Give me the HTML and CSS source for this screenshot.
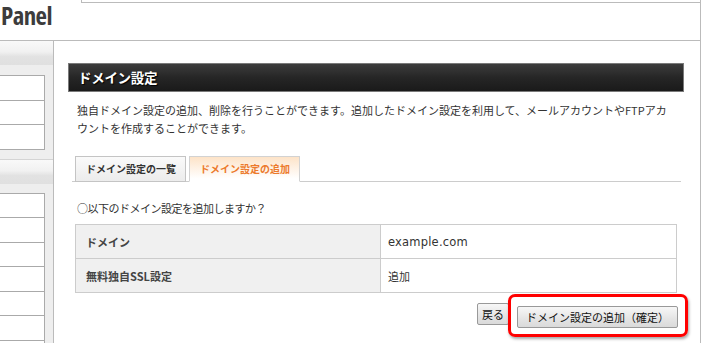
FILE: index.html
```html
<!DOCTYPE html>
<html lang="ja">
<head>
  <meta charset="UTF-8">
  <title>ドメイン設定</title>
  <link rel="stylesheet" href="styles.css">
</head>
<body>

<div class="page">

  <!-- Header -->
  <header class="topbar">
    <div class="logo">Panel</div>
    <div class="notice"></div>
  </header>

  <div class="layout">

    <!-- Side menu -->
    <aside class="sidebar">
      <div class="side-head"></div>
      <ul class="side-menu">
        <li></li>
        <li></li>
        <li></li>
      </ul>
      <div class="side-head"></div>
      <ul class="side-menu">
        <li></li>
        <li></li>
        <li></li>
        <li></li>
        <li></li>
        <li></li>
        <li></li>
      </ul>
    </aside>

    <!-- Main content -->
    <main class="content">
      <h2 class="title">ドメイン設定</h2>
      <p class="lead">独自ドメイン設定の追加、削除を行うことができます。追加したドメイン設定を利用して、メールアカウントやFTPアカウントを作成することができます。</p>

      <ul class="tabs">
        <li>ドメイン設定の一覧</li>
        <li class="active">ドメイン設定の追加</li>
      </ul>

      <p class="question">○以下のドメイン設定を追加しますか？</p>

      <table class="detail">
        <tr>
          <th>ドメイン</th>
          <td class="domain">example.com</td>
        </tr>
        <tr>
          <th>無料独自SSL設定</th>
          <td>追加</td>
        </tr>
      </table>

      <div class="actions">
        <button class="btn">戻る</button>
        <span class="highlight"><button class="btn btn-submit">ドメイン設定の追加（確定）</button></span>
      </div>
    </main>

  </div>
</div>

</body>
</html>
```

FILE: styles.css
```css
body {
  margin: 0;
  background: #fff;
  font-family: "Noto Sans CJK JP", sans-serif;
  color: #333;
}

.page {
  width: 700px;
  height: 343px;
  overflow: hidden;
  border-right: 1px solid #bbb;
}

/* header */
.topbar {
  display: flex;
  height: 40px;
  border-bottom: 1px solid #bbb;
}

.logo {
  width: 80px;
  padding: 2px 0 0 1px;
  font-family: "Open Sans", sans-serif;
  font-weight: bold;
  font-size: 25px;
  font-stretch: 87%;
  line-height: 26px;
  letter-spacing: -0.6px;
  color: #3c3c3c;
}

.notice {
  flex: 1;
  height: 2px;
  border-left: 1px solid #bbb;
  border-bottom: 1px solid #bbb;
}

.layout {
  display: flex;
}

/* sidebar */
.sidebar {
  width: 53px;
  flex-shrink: 0;
  height: 302px;
  background: #eeeeee;
  border-right: 1px solid #bbb;
}

.side-head {
  height: 24px;
  border-top: 1px solid #d4d4d4;
  background: linear-gradient(#f9f9f9, #f1f1f1 45%, #e2e2e2 65%, #e0e0e0);
  margin-bottom: 9px;
}

.side-head:first-child {
  border-top: 0;
  margin-bottom: 10px;
}

.side-menu {
  list-style: none;
  margin: 0 8px 9px -1px;
  padding: 0;
  background: #fff;
  border: 1px solid #aaa;
  border-bottom: 0;
}

.side-menu li {
  height: 23.5px;
  border-bottom: 1px solid #aaa;
}

/* content */
.content {
  flex: 1;
  padding: 22px 16px 0 14px;
}

.title {
  margin: 0;
  height: 27px;
  line-height: 27px;
  padding-left: 9px;
  border: 1px solid #7a7a7a;
  background: linear-gradient(#3c3c3c, #262626 50%, #1a1a1a);
  color: #fff;
  font-size: 13.5px;
  font-weight: bold;
  letter-spacing: -0.3px;
  text-shadow: 1px 1px 1px #000;
}

.lead {
  margin: 9px 10px 0 9px;
  font-size: 11px;
  line-height: 18px;
  color: #333;
}

.tabs {
  list-style: none;
  display: flex;
  margin: 19px 3px 0 4px;
  padding: 0 0 0 3px;
  border-bottom: 1px solid #ccc;
}

.tabs li {
  height: 24px;
  line-height: 24px;
  padding: 0 9px 0 10px;
  margin-right: 3px;
  margin-bottom: -1px;
  border: 1px solid #c4c4c4;
  background: linear-gradient(#fafafa, #ececec);
  font-size: 10px;
  font-weight: bold;
  color: #333;
}

.tabs li.active {
  border-color: #d2d2d2;
  border-bottom-color: #fff;
  background: linear-gradient(#fde3c8, #fff 90%);
  color: #ec7a2c;
}

.question {
  margin: 17px 0 0 9px;
  font-size: 11px;
  line-height: 18px;
  letter-spacing: -0.5px;
  color: #333;
}

.detail {
  width: 602px;
  margin: 7px 0 0 7px;
  border-collapse: collapse;
  font-size: 11px;
}

.detail th,
.detail td {
  height: 33px;
  border: 1px solid #ccc;
  text-align: left;
  padding: 0;
}

.detail th {
  width: 294px;
  padding-left: 10px;
  background: #f0f0f0;
  color: #444;
  font-weight: bold;
}

.detail td {
  padding-left: 7px;
  color: #333;
}

.detail td.domain {
  font-family: "DejaVu Sans", sans-serif;
  font-size: 11.5px;
  letter-spacing: 0.2px;
}

.actions {
  display: flex;
  justify-content: flex-end;
  margin: 10px 6px 0 0;
}

.btn {
  height: 22px;
  padding: 0 4px;
  border: 1px solid #999;
  border-radius: 2px;
  background: linear-gradient(#f7f7f7, #e4e4e4 60%, #dadada);
  font-family: "Noto Sans CJK JP", sans-serif;
  font-size: 11px;
  line-height: 20px;
  color: #111;
  cursor: pointer;
}

.highlight {
  position: relative;
  margin-left: 8px;
}

.btn-submit {
  padding: 0 8px;
}

/* red annotation frame around the confirm button */
.highlight::after {
  content: "";
  position: absolute;
  left: -9px;
  top: -9px;
  right: -10px;
  bottom: -9px;
  border: 3px solid #f00;
  border-radius: 7px;
  box-shadow: 1px 2px 3px rgba(0, 0, 0, 0.35);
  pointer-events: none;
}
```
